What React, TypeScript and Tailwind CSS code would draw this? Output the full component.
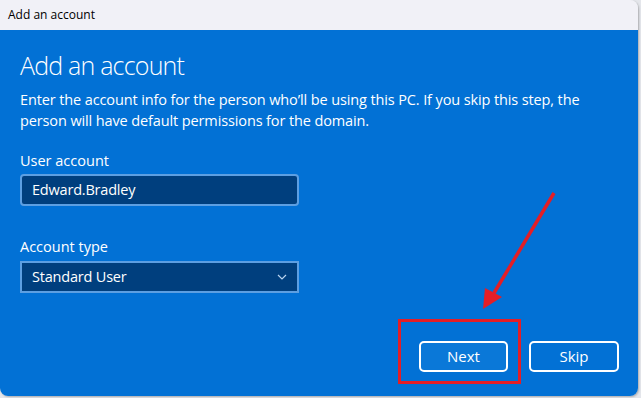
import React from "react";

export default function App() {
  return (
    <div
      className="relative w-[641px] h-[398px] bg-[#e4e6eb] overflow-hidden"
      style={{ fontFamily: '"Open Sans", "Noto Sans", Arial, sans-serif' }}
    >
      <div className="w-[638px] h-[396px] rounded-b-lg rounded-tr-lg overflow-hidden flex flex-col shadow-[1px_1px_2px_rgba(0,0,0,0.25)]">
        <div className="h-[30px] bg-[#f1f1f7] flex items-center px-2 text-[12px] text-black">
          Add an account
        </div>

        <div className="flex-1 bg-[#0271d5] text-white flex flex-col pl-5 pr-[19px]">
          <h1 className="mt-[18px] text-[25px] leading-[34px] font-light tracking-[-0.8px]">
            Add an account
          </h1>
          <p className="mt-[7px] text-[14.5px] leading-[21px] tracking-[-0.12px] w-[600px]">
            Enter the account info for the person who’ll be using this PC. If
            you skip this step, the person will have default permissions for
            the domain.
          </p>

          <label className="mt-[19px] text-[14.5px] leading-[21px]">
            User account
          </label>
          <div className="mt-[3px] w-[279px] h-[32px] rounded-[4px] border-2 border-[#5d9fe2] bg-[#003f7e] flex items-center px-[10px] text-[14.5px] tracking-[-0.2px]">
            Edward.Bradley
          </div>

          <label className="mt-[30px] text-[14.5px] leading-[21px]">
            Account type
          </label>
          <div className="mt-[4px] w-[279px] h-[32px] border-2 border-[#5d9fe2] bg-[#003f7e] flex items-center justify-between pl-[10px] pr-[10px] text-[14.5px] tracking-[-0.2px]">
            <span>Standard User</span>
            <svg width="10" height="6" viewBox="0 0 10 6" fill="none">
              <path d="M1 1l4 4 4-4" stroke="#b9d3ee" strokeWidth="1.2" />
            </svg>
          </div>

          <div className="mt-[48px] flex justify-end gap-[21px]">
            <button className="w-[89px] h-[31px] rounded-[5px] border-2 border-white bg-[#0a78d8] text-[15px]">
              Next
            </button>
            <button className="w-[90px] h-[31px] rounded-[5px] border-2 border-white text-[15px]">
              Skip
            </button>
          </div>
        </div>
      </div>

      {/* annotation */}
      <div className="absolute left-[398px] top-[319px] w-[123px] h-[65px] border-[3px] border-[#e41e26]" />
      <svg
        className="absolute left-0 top-0"
        width="641"
        height="398"
        viewBox="0 0 641 398"
      >
        <line
          x1="554"
          y1="193"
          x2="494"
          y2="293"
          stroke="#e41e26"
          strokeWidth="3.5"
        />
        <polygon points="483,309 485,288 502,297" fill="#e41e26" />
      </svg>
    </div>
  );
}
